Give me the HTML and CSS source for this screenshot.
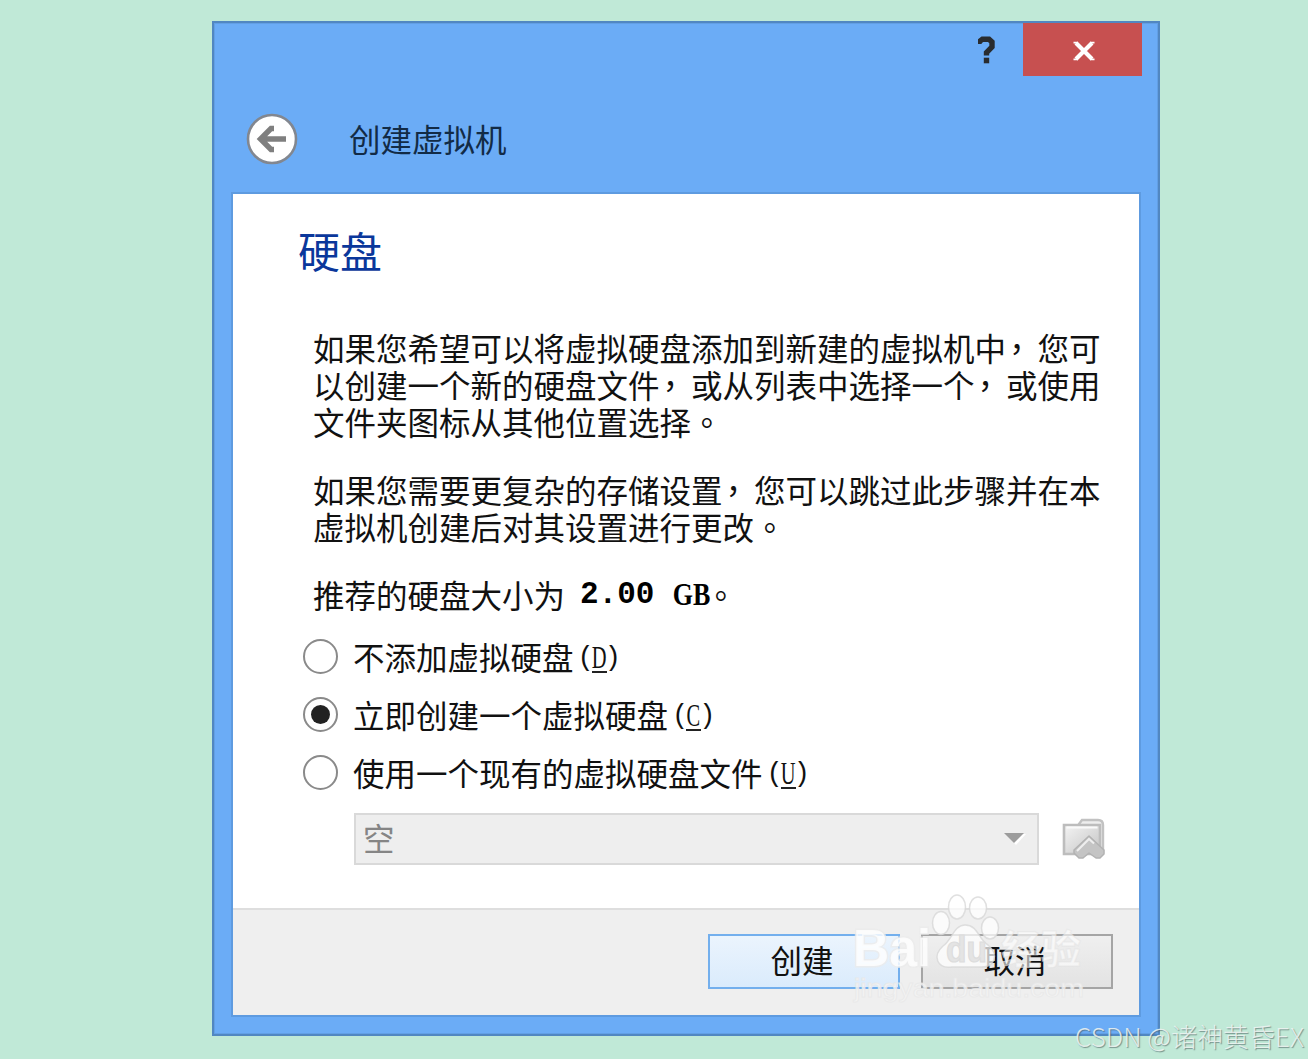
FILE: index.html
```
<!DOCTYPE html>
<html lang="zh-CN">
  <head>
    <meta charset="UTF-8">
    <title>创建虚拟机</title>
    <link rel="stylesheet" href="styles.css">
  </head>
  <body>
    <main class="dialog">
      <div class="titlebar">
        <span class="help">
          <svg width="18" height="28" viewBox="0 0 18 28" fill="none" stroke="#292c2f" stroke-width="5.4">
            <path d="M1 8V6L4.500 3.200H11L14 6V11L8.500 16.500V19.500"/>
            <path d="M5.800 24.500H11.200" stroke-width="5.600"/>
          </svg>
        </span>
        <button class="close">
          <svg width="22" height="20" viewBox="0 0 22 20" fill="none" stroke="#fff">
            <path d="M3 2L19 18M19 2L3 18" stroke-width="4.200"/>
            <path d="M0.500 1.600H5M17 1.600H21.500M0.500 18.400H5M17 18.400H21.500" stroke-width="1.800"/>
          </svg>
        </button>
      </div>
      <div class="caption">
        <svg class="back" width="52" height="52" viewBox="0 0 52 52">
          <circle cx="26" cy="26" r="24" fill="#fff" stroke="#828790" stroke-width="2.600"/>
          <path d="M40 26H14M28 15.500H25L14.500 26L25 36.500H28" fill="none" stroke="#7f7f7f" stroke-width="5.400"/>
        </svg>
        <span class="caption-text">创建虚拟机</span>
      </div>

      <div class="panel">
        <div class="content">
          <h1>硬盘</h1>
          <p class="intro">如果您希望可以将虚拟硬盘添加到新建的虚拟机中<i class="comma" lang="zh-TW">，</i>您可<br>以创建一个新的硬盘文件<i class="comma" lang="zh-TW">，</i>或从列表中选择一个<i class="comma" lang="zh-TW">，</i>或使用<br>文件夹图标从其他位置选择<i class="stop" lang="zh-TW">。</i></p>
          <p class="more">如果您需要更复杂的存储设置<i class="comma" lang="zh-TW">，</i>您可以跳过此步骤并在本<br>虚拟机创建后对其设置进行更改<i class="stop" lang="zh-TW">。</i></p>
          <p class="size">推荐的硬盘大小为<b class="num">2.00</b><b class="unit">GB</b><i class="stop" lang="zh-TW">。</i></p>

          <div class="options">
            <label class="option"><span class="radio"></span>不添加虚拟硬盘<span class="key">(<u><span>D</span></u>)</span></label>
            <label class="option"><span class="radio checked"></span>立即创建一个虚拟硬盘<span class="key">(<u><span>C</span></u>)</span></label>
            <label class="option"><span class="radio"></span>使用一个现有的虚拟硬盘文件<span class="key">(<u><span>U</span></u>)</span></label>
          </div>

          <div class="file-row">
            <div class="combo">
              <span>空</span>
              <svg width="22" height="14" viewBox="0 0 22 14">
                <path d="M2 2H22L12 13Z" fill="#fff"/>
                <path d="M0 1H20L10 11Z" fill="#9c9c9c"/>
              </svg>
            </div>
            <svg class="folder" width="44" height="42" viewBox="0 0 44 42">
              <defs>
                <linearGradient id="face" x1="0" y1="0" x2="1" y2="1">
                  <stop offset="0" stop-color="#f4f4f4"/>
                  <stop offset="1" stop-color="#c4c4c4"/>
                </linearGradient>
              </defs>
              <path d="M17 6L20 2H36Q41 2 41 7V34H17Z" fill="#eee" stroke="#c2c2c2" stroke-width="2.400"/>
              <path d="M2 7H38V36H2Z" fill="url(#face)" stroke="#bdbdbd" stroke-width="2.600"/>
              <path d="M4.500 9.500H35.500" stroke="#fafafa" stroke-width="2"/>
              <path d="M27 18L42 32V36L38 40H34L27 35L21 40H17L12 35V32Z" fill="#c4c4c4" stroke="#b2b2b2" stroke-width="1.500" stroke-linejoin="round"/>
              <path d="M15 33L27 21L32 25.500" fill="none" stroke="#eee" stroke-width="2"/>
            </svg>
          </div>
        </div>

        <div class="footer">
          <button class="btn primary">创建</button>
          <button class="btn">取消</button>
        </div>
      </div>
    </main>

    <!-- site watermark over the buttons -->
    <svg class="stamp" width="240" height="120" viewBox="0 0 240 120">
      <g fill="#fff" fill-opacity=".72" stroke="#d5d5d5" stroke-opacity=".75" stroke-width="1.500">
        <ellipse cx="89" cy="33" rx="8.500" ry="11.500"/>
        <ellipse cx="105" cy="17" rx="8.500" ry="12"/>
        <ellipse cx="126" cy="18" rx="8.500" ry="11"/>
        <ellipse cx="138" cy="38" rx="8.500" ry="11"/>
        <path d="M113 35C126 35 126 49 136 55C148 65 142 78 128 77H100C85 79 80 66 91 56C100 50 102 35 113 35Z"/>
      </g>
      <g class="stamp-text">
        <text class="bai" x="1" y="76" font-size="51" textLength="78" lengthAdjust="spacingAndGlyphs">Bai</text>
        <text class="du" x="94" y="72" font-size="37" textLength="41" lengthAdjust="spacingAndGlyphs">du</text>
        <text x="149" y="74" font-size="40" textLength="80" lengthAdjust="spacingAndGlyphs">经验</text>
        <text class="url" x="2" y="107" font-size="25" textLength="230" lengthAdjust="spacingAndGlyphs">jingyan.baidu.com</text>
      </g>
    </svg>
    <div class="credit">CSDN @诸神黄昏EX</div>
  </body>
</html>
```

FILE: styles.css
```
*{
  box-sizing: border-box;
}
html, body{
  margin: 0;
  padding: 0;
  width: 100%;
  height: 100%;
  overflow: hidden;
}
body{
  padding: 21px 0 0 212px;
  background: #c0e9d7;
  color: #111;
  font-family: "Noto Sans CJK SC", sans-serif;
  font-size: 31.5px;
}
svg{
  display: block;
}
p, h1{
  margin: 0;
}
button{
  padding: 0;
  font: inherit;
  color: inherit;
}

.dialog{
  width: 948px;
  height: 1015px;
  border: 2px solid #5187c1;
  background: #6bacf6;
  box-shadow: inset 0 0 0 1px #629fe5;
}

  .titlebar{
    display: flex;
    justify-content: flex-end;
    height: 53px;
    padding-right: 16px;
  }
  .help{
    padding: 13px 27px 0 0;
  }
  .close{
    display: flex;
    align-items: center;
    justify-content: center;
    width: 119px;
    height: 53px;
    padding-left: 2px;
    padding-top: 3px;
    border: 0;
    background: #c75050;
  }

  .caption{
    display: flex;
    align-items: center;
    height: 118px;
    padding: 7px 0 0 32px;
  }
  .caption-text{
    margin: 0 0 1px 51px;
    line-height: 40px;
    color: #122b46;
  }

  .panel{
    width: 906px;
    height: 821px;
    margin: 0 0 0 19px;
    background: #fff;
    box-shadow: 0 0 0 2px #5e9be0;
  }
  .content{
    height: 714px;
    padding: 33px 0 0 65px;
    white-space: nowrap;
  }
  h1{
    height: 46px;
    line-height: 46px;
    font-size: 42px;
    font-weight: 400;
    color: #0a379b;
  }
  .intro,
  .more,
  .size{
    padding-left: 15px;
    line-height: 37px;
  }
  .intro{
    margin-top: 56px;
  }
  .more{
    margin-top: 31px;
  }
  .size{
    display: flex;
    height: 37px;
    margin-top: 31px;
  }
  .comma,
  .stop{
    font-family: "Noto Sans CJK TC", sans-serif;
    font-style: normal;
  }
  .comma{
    position: relative;
    left: -5px;
  }
  .num,
  .unit{
    color: #000;
  }
  .num{
    width: 92px;
    padding-left: 15px;
    font: bold 31px/38px "Liberation Mono", monospace;
  }
  .unit{
    width: 52px;
    padding-left: 16px;
    font: bold 31px/38px "Liberation Serif", serif;
    transform: scaleX(.84);
    transform-origin: 15px 0;
  }
  .size .stop{
    margin-left: -4px;
  }

  .options{
    margin-top: 15px;
  }
  .option{
    display: flex;
    align-items: center;
    height: 58px;
    padding: 0 0 2px 5px;
  }
  .radio{
    display: flex;
    align-items: center;
    justify-content: center;
    width: 35px;
    height: 35px;
    margin: 1px 15px 1px 0;
    border: 2px solid #8a8a8a;
    border-radius: 50%;
    background: #fff;
  }
  .radio.checked::after{
    content: "";
    width: 19px;
    height: 19px;
    border-radius: 50%;
    background: #222;
  }
  .key{
    display: flex;
    align-items: center;
    padding: 4px 0 0 4px;
    font: 27px/36px "Liberation Mono", monospace;
  }
  .key u{
    display: flex;
    justify-content: center;
    width: 15px;
    height: 29px;
    margin: 0 -2px;
    border-bottom: 2px solid #222;
    text-decoration: none;
    font: 31px/28px "Liberation Serif", serif;
  }
  .key u span{
    transform: scaleX(.66);
  }

  .file-row{
    display: flex;
    align-items: center;
    margin-top: 11px;
    padding-left: 56px;
  }
  .combo{
    display: flex;
    align-items: center;
    justify-content: space-between;
    width: 685px;
    height: 52px;
    padding: 0 11px 0 7px;
    border: 2px solid #d9d9d9;
    background: #eee;
    color: #858585;
  }
  .combo span{
    padding-bottom: 4px;
  }
  .folder{
    margin-left: 23px;
  }

  .footer{
    display: flex;
    gap: 21px;
    height: 107px;
    padding: 24px 0 0 475px;
    border-top: 2px solid #dedede;
    background: #efefef;
  }
  .btn{
    width: 192px;
    height: 55px;
    padding: 0 4px 6px 0;
    border: 2px solid #a5a5a5;
    background: linear-gradient(#efefef, #e3e3e3);
  }
  .btn.primary{
    border-color: #73afed;
    background: linear-gradient(#ebf4fd, #daebfc);
  }

.stamp{
  position: absolute;
  left: 852px;
  top: 890px;
}
.stamp-text{
  font-family: "Liberation Sans", "Noto Sans CJK SC", sans-serif;
  font-weight: bold;
  fill: rgba(255, 255, 255, .6);
  stroke: rgba(225, 225, 225, .5);
  stroke-width: 1.2px;
}
.stamp-text .bai{
  fill: rgba(255, 255, 255, .8);
  stroke: rgba(235, 235, 235, .8);
  stroke-width: 3px;
  paint-order: stroke;
}
.stamp-text .du{
  fill: #e4e4e4;
  stroke: #ddd;
}
.stamp-text .url{
  font-weight: normal;
  fill: rgba(246, 246, 246, .8);
  stroke: rgba(232, 232, 232, .8);
  stroke-width: 1px;
}

.credit{
  position: absolute;
  right: 4px;
  top: 1020px;
  line-height: 32px;
  font-size: 26px;
  font-weight: 300;
  white-space: nowrap;
  color: rgba(240, 245, 243, .85);
  text-shadow: 1px 1px 1px rgba(70, 90, 90, .6);
}
```
